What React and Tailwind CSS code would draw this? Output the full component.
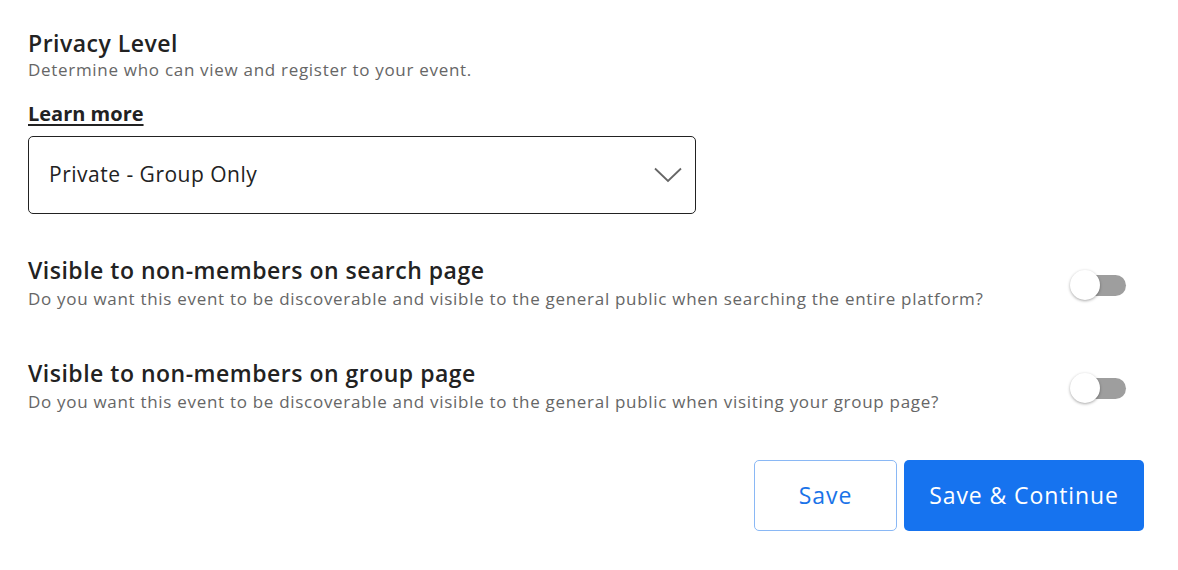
import { useState } from 'react'

function Toggle({ on, onChange }) {
  return (
    <button
      onClick={() => onChange(!on)}
      className="relative w-[58px] h-[32px] shrink-0"
    >
      <span className={`absolute left-[4px] right-[2px] top-[6px] h-[21px] rounded-full ${on ? 'bg-[#8ab4f8]' : 'bg-[#9e9e9e]'}`} />
      <span
        className={`absolute top-[1px] w-[30px] h-[30px] rounded-full bg-white shadow-[0_1px_3px_rgba(0,0,0,0.35)] ${on ? 'left-[28px]' : 'left-0'}`}
      />
    </button>
  )
}

function VisibilityRow({ title, text, on, onChange }) {
  return (
    <div className="flex items-center justify-between">
      <div>
        <h3 className="text-[23px] leading-[30px] font-semibold tracking-[0.5px] text-[#222]">{title}</h3>
        <p className="text-[17px] leading-[27px] tracking-[0.7px] text-[#666]">{text}</p>
      </div>
      <div className="mr-[22px] mt-[9px]">
        <Toggle on={on} onChange={onChange} />
      </div>
    </div>
  )
}

export default function App() {
  const [search, setSearch] = useState(false)
  const [group, setGroup] = useState(false)

  return (
    <div className="w-[1178px] h-[570px] bg-white px-[28px] pt-[28px] font-['Open_Sans',sans-serif]">
      <h2 className="text-[23px] leading-[30px] font-semibold tracking-[0.5px] text-[#222]">Privacy Level</h2>
      <p className="text-[17px] leading-[24px] tracking-[0.7px] text-[#666]">Determine who can view and register to your event.</p>
      <a href="#" className="inline-block mt-[19px] text-[20px] leading-[26px] font-bold text-[#222] underline underline-offset-[3px]">
        Learn more
      </a>

      <div className="mt-[9px] w-[668px] h-[78px] border border-[#222] rounded-[5px] flex items-center justify-between pl-[20px] pr-[13px]">
        <span className="text-[21px] tracking-[0.5px] text-[#222]">Private - Group Only</span>
        <svg width="28" height="16" viewBox="0 0 28 16" fill="none">
          <path d="M1 1.5 L14 14 L27 1.5" stroke="#666" strokeWidth="1.8" />
        </svg>
      </div>

      <div className="mt-[41px] flex flex-col gap-[46px]">
        <VisibilityRow
          title="Visible to non-members on search page"
          text="Do you want this event to be discoverable and visible to the general public when searching the entire platform?"
          on={search}
          onChange={setSearch}
        />
        <VisibilityRow
          title="Visible to non-members on group page"
          text="Do you want this event to be discoverable and visible to the general public when visiting your group page?"
          on={group}
          onChange={setGroup}
        />
      </div>

      <div className="mt-[45px] flex justify-end gap-[7px] pr-[6px]">
        <button className="w-[143px] h-[71px] rounded-[5px] border border-[#8ab8f5] text-[23px] tracking-[0.9px] text-[#1a73e8]">
          Save
        </button>
        <button className="w-[240px] h-[71px] rounded-[5px] bg-[#1673ef] text-[23px] tracking-[0.9px] text-white">
          Save &amp; Continue
        </button>
      </div>
    </div>
  )
}
